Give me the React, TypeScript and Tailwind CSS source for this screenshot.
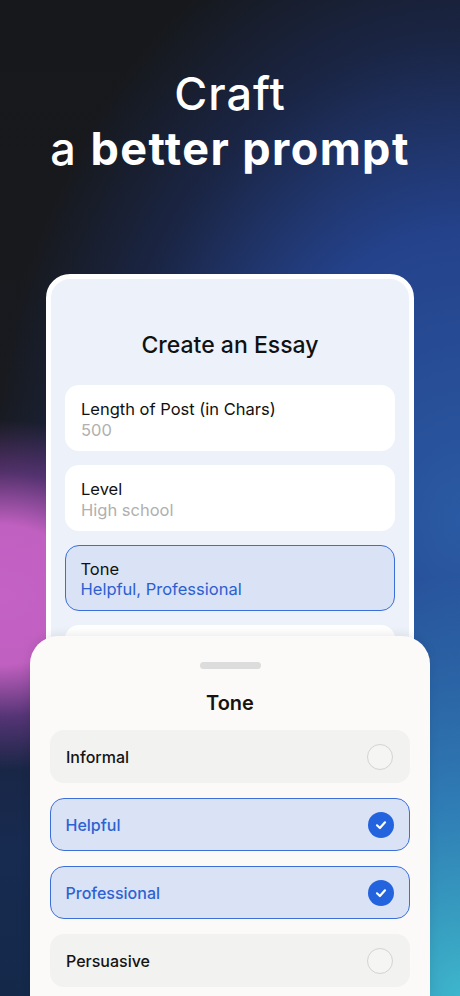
import React from "react";

const font = { fontFamily: "Inter, 'Noto Sans', sans-serif" };

function Field({ label, value, active }: { label: string; value: string; active?: boolean }) {
  return (
    <div
      className={
        active
          ? "h-[66px] rounded-[14px] bg-[#dae2f5] border-[1.5px] border-[#3a6ed8] pl-[14.5px] pt-[12.5px] flex flex-col"
          : "h-[66px] rounded-[14px] bg-white pl-[16px] pt-[14px] flex flex-col"
      }
    >
      <span className="text-[16.5px] leading-[20.5px] text-[#111111]">{label}</span>
      <span className={active ? "text-[16.5px] leading-[20.5px] text-[#2c60d0]" : "text-[16.5px] leading-[20.5px] text-[#b0b0b0]"}>
        {value}
      </span>
    </div>
  );
}

function Option({ label, selected }: { label: string; selected?: boolean }) {
  return (
    <div
      className={
        selected
          ? "h-[53px] rounded-[14px] bg-[#dae2f6] border-[1.5px] border-[#3c70d8] pl-[14.5px] pr-[15.5px] flex items-center justify-between"
          : "h-[53px] rounded-[14px] bg-[#f2f2f1] pl-[16px] pr-[17px] flex items-center justify-between"
      }
    >
      <span className={selected ? "text-[16px] font-medium text-[#2d62d2]" : "text-[16px] font-medium text-[#141414]"}>
        {label}
      </span>
      {selected ? (
        <div className="w-[26px] h-[26px] rounded-full bg-[#2463de] flex items-center justify-center">
          <svg width="14" height="14" viewBox="0 0 14 14" fill="none">
            <path d="M3 7.3 L5.9 10 L11 4.3" stroke="white" strokeWidth="2.2" strokeLinecap="round" strokeLinejoin="round" />
          </svg>
        </div>
      ) : (
        <div className="w-[26px] h-[26px] rounded-full border-[1.5px] border-[#d3d3d3] bg-[#f5f5f4]" />
      )}
    </div>
  );
}

export default function App() {
  return (
    <div
      style={font}
      className="relative w-[460px] h-[996px] overflow-hidden bg-[radial-gradient(ellipse_220px_175px_at_0px_595px,#c462c6_0%,#c060c0_40%,rgba(130,65,160,0.55)_70%,transparent_100%),radial-gradient(ellipse_330px_420px_at_100%_100%,#3eb6cd_0%,rgba(52,150,200,0.7)_45%,transparent_100%),radial-gradient(ellipse_470px_640px_at_100%_520px,#2a5aa3_0%,#24428b_45%,rgba(30,50,110,0.5)_75%,transparent_100%),linear-gradient(180deg,#16181b_0%,#181a1f_40%,#1c2136_65%,#172a50_85%,#14294a_100%)]"
    >
      <div className="pt-[66px] flex flex-col items-center text-white">
        <div className="text-[45px] leading-[55px] font-medium tracking-[1px]">Craft</div>
        <div className="text-[45px] leading-[55px] tracking-[1.4px]">
          <span className="font-medium">a </span>
          <span className="font-bold">better prompt</span>
        </div>
      </div>

      <div className="mt-[98px] mx-auto w-[368px] h-[760px] rounded-[24px] border-[5px] border-white bg-[#edf1fa]">
        <div className="pt-[52px] text-center text-[23px] leading-[28px] font-medium text-[#111111]">Create an Essay</div>
        <div className="mt-[26px] px-[14px] flex flex-col gap-[14px]">
          <Field label="Length of Post (in Chars)" value="500" />
          <Field label="Level" value="High school" />
          <Field label="Tone" value="Helpful, Professional" active />
          <div className="h-[66px] rounded-[14px] bg-white" />
        </div>
      </div>

      <div className="absolute left-[30px] top-[636px] w-[400px] bottom-0 rounded-t-[28px] bg-[#fbfaf8] shadow-[0_-2px_10px_rgba(0,0,0,0.08)]">
        <div className="mt-[26px] mx-auto w-[61px] h-[7px] rounded-full bg-[#dcdcdc]" />
        <div className="mt-[21px] text-center text-[20px] leading-[26px] font-semibold text-[#141414]">Tone</div>
        <div className="mt-[14px] px-[20px] flex flex-col gap-[15px]">
          <Option label="Informal" />
          <Option label="Helpful" selected />
          <Option label="Professional" selected />
          <Option label="Persuasive" />
        </div>
      </div>
    </div>
  );
}
